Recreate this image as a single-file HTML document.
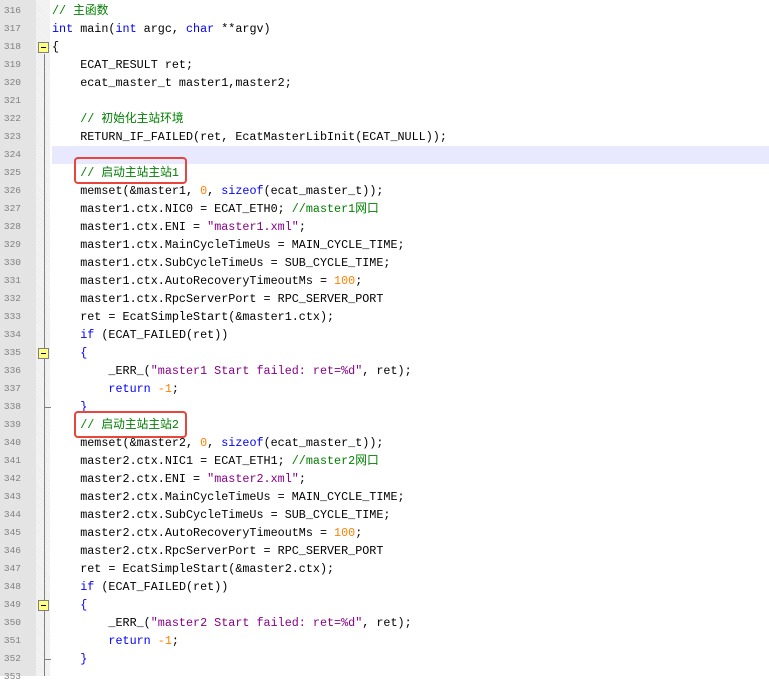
<!DOCTYPE html>
<html><head><meta charset="utf-8"><style>
html,body{margin:0;padding:0;}
body{width:769px;height:676px;overflow:hidden;background:#fff;position:relative;font-family:"Liberation Mono","Noto Sans CJK SC",monospace;}
#gut{position:absolute;left:0;top:0;width:36px;height:676px;background:#e4e4e4;}
#hatch{position:absolute;left:36px;top:0;width:14px;height:676px;background:repeating-linear-gradient(45deg,#f6f6f6 0 1px,#ececec 1px 2px);}
#vl{position:absolute;left:44px;top:54px;width:1px;height:622px;background:#808080;}
#w{position:absolute;left:0;top:1px;width:769px;height:676px;}
.ln{position:absolute;left:0;width:21px;text-align:right;font-size:9.5px;color:#808080;height:18px;line-height:18px;font-family:"Liberation Mono",monospace;}
.c{position:absolute;left:52px;height:18px;line-height:18px;font-size:11.75px;white-space:pre;color:#000;}
.k{color:#0000ff}.s{color:#808}.n{color:#ff8000}.g{color:#008000}
.fold{position:absolute;left:38px;width:11px;height:11px;background:#ffff80;border:1px solid #808080;box-sizing:border-box;}
.fold:after{content:"";position:absolute;left:2px;top:4px;width:5px;height:1px;background:#000;}
.tick{position:absolute;left:44px;width:7px;height:1px;background:#808080;}
.hl{position:absolute;left:52px;top:146px;width:717px;height:18px;background:#e8e8ff;}
.box{position:absolute;left:74px;width:113px;height:27px;border:2.5px solid #e8453c;border-radius:4px;box-sizing:border-box;}
</style></head><body>
<div id="gut"></div><div id="hatch"></div><div id="vl"></div>
<div class="hl"></div>
<div id="w">
<div class="ln" style="top:1px">316</div><div class="c" style="top:1px"><span class="g">// 主函数</span></div>
<div class="ln" style="top:19px">317</div><div class="c" style="top:19px"><span class="k">int</span> main(<span class="k">int</span> argc, <span class="k">char</span> **argv)</div>
<div class="ln" style="top:37px">318</div><div class="c" style="top:37px">{</div>
<div class="ln" style="top:55px">319</div><div class="c" style="top:55px">    ECAT_RESULT ret;</div>
<div class="ln" style="top:73px">320</div><div class="c" style="top:73px">    ecat_master_t master1,master2;</div>
<div class="ln" style="top:91px">321</div>
<div class="ln" style="top:109px">322</div><div class="c" style="top:109px">    <span class="g">// 初始化主站环境</span></div>
<div class="ln" style="top:127px">323</div><div class="c" style="top:127px">    RETURN_IF_FAILED(ret, EcatMasterLibInit(ECAT_NULL));</div>
<div class="ln" style="top:145px">324</div>
<div class="ln" style="top:163px">325</div><div class="c" style="top:163px">    <span class="g">// 启动主站主站1</span></div>
<div class="ln" style="top:181px">326</div><div class="c" style="top:181px">    memset(&amp;master1, <span class="n">0</span>, <span class="k">sizeof</span>(ecat_master_t));</div>
<div class="ln" style="top:199px">327</div><div class="c" style="top:199px">    master1.ctx.NIC0 = ECAT_ETH0; <span class="g">//master1网口</span></div>
<div class="ln" style="top:217px">328</div><div class="c" style="top:217px">    master1.ctx.ENI = <span class="s">"master1.xml"</span>;</div>
<div class="ln" style="top:235px">329</div><div class="c" style="top:235px">    master1.ctx.MainCycleTimeUs = MAIN_CYCLE_TIME;</div>
<div class="ln" style="top:253px">330</div><div class="c" style="top:253px">    master1.ctx.SubCycleTimeUs = SUB_CYCLE_TIME;</div>
<div class="ln" style="top:271px">331</div><div class="c" style="top:271px">    master1.ctx.AutoRecoveryTimeoutMs = <span class="n">100</span>;</div>
<div class="ln" style="top:289px">332</div><div class="c" style="top:289px">    master1.ctx.RpcServerPort = RPC_SERVER_PORT</div>
<div class="ln" style="top:307px">333</div><div class="c" style="top:307px">    ret = EcatSimpleStart(&amp;master1.ctx);</div>
<div class="ln" style="top:325px">334</div><div class="c" style="top:325px">    <span class="k">if</span> (ECAT_FAILED(ret))</div>
<div class="ln" style="top:343px">335</div><div class="c" style="top:343px">    <span class="k">{</span></div>
<div class="ln" style="top:361px">336</div><div class="c" style="top:361px">        _ERR_(<span class="s">"master1 Start failed: ret=%d"</span>, ret);</div>
<div class="ln" style="top:379px">337</div><div class="c" style="top:379px">        <span class="k">return</span> <span class="n">-1</span>;</div>
<div class="ln" style="top:397px">338</div><div class="c" style="top:397px">    <span class="k">}</span></div>
<div class="ln" style="top:415px">339</div><div class="c" style="top:415px">    <span class="g">// 启动主站主站2</span></div>
<div class="ln" style="top:433px">340</div><div class="c" style="top:433px">    memset(&amp;master2, <span class="n">0</span>, <span class="k">sizeof</span>(ecat_master_t));</div>
<div class="ln" style="top:451px">341</div><div class="c" style="top:451px">    master2.ctx.NIC1 = ECAT_ETH1; <span class="g">//master2网口</span></div>
<div class="ln" style="top:469px">342</div><div class="c" style="top:469px">    master2.ctx.ENI = <span class="s">"master2.xml"</span>;</div>
<div class="ln" style="top:487px">343</div><div class="c" style="top:487px">    master2.ctx.MainCycleTimeUs = MAIN_CYCLE_TIME;</div>
<div class="ln" style="top:505px">344</div><div class="c" style="top:505px">    master2.ctx.SubCycleTimeUs = SUB_CYCLE_TIME;</div>
<div class="ln" style="top:523px">345</div><div class="c" style="top:523px">    master2.ctx.AutoRecoveryTimeoutMs = <span class="n">100</span>;</div>
<div class="ln" style="top:541px">346</div><div class="c" style="top:541px">    master2.ctx.RpcServerPort = RPC_SERVER_PORT</div>
<div class="ln" style="top:559px">347</div><div class="c" style="top:559px">    ret = EcatSimpleStart(&amp;master2.ctx);</div>
<div class="ln" style="top:577px">348</div><div class="c" style="top:577px">    <span class="k">if</span> (ECAT_FAILED(ret))</div>
<div class="ln" style="top:595px">349</div><div class="c" style="top:595px">    <span class="k">{</span></div>
<div class="ln" style="top:613px">350</div><div class="c" style="top:613px">        _ERR_(<span class="s">"master2 Start failed: ret=%d"</span>, ret);</div>
<div class="ln" style="top:631px">351</div><div class="c" style="top:631px">        <span class="k">return</span> <span class="n">-1</span>;</div>
<div class="ln" style="top:649px">352</div><div class="c" style="top:649px">    <span class="k">}</span></div>
<div class="ln" style="top:667px">353</div>
<div class="fold" style="top:41px"></div>
<div class="fold" style="top:347px"></div>
<div class="fold" style="top:599px"></div>
<div class="tick" style="top:406px"></div>
<div class="tick" style="top:658px"></div>
<div class="box" style="top:156px"></div>
<div class="box" style="top:410px"></div>
</div>
</body></html>
